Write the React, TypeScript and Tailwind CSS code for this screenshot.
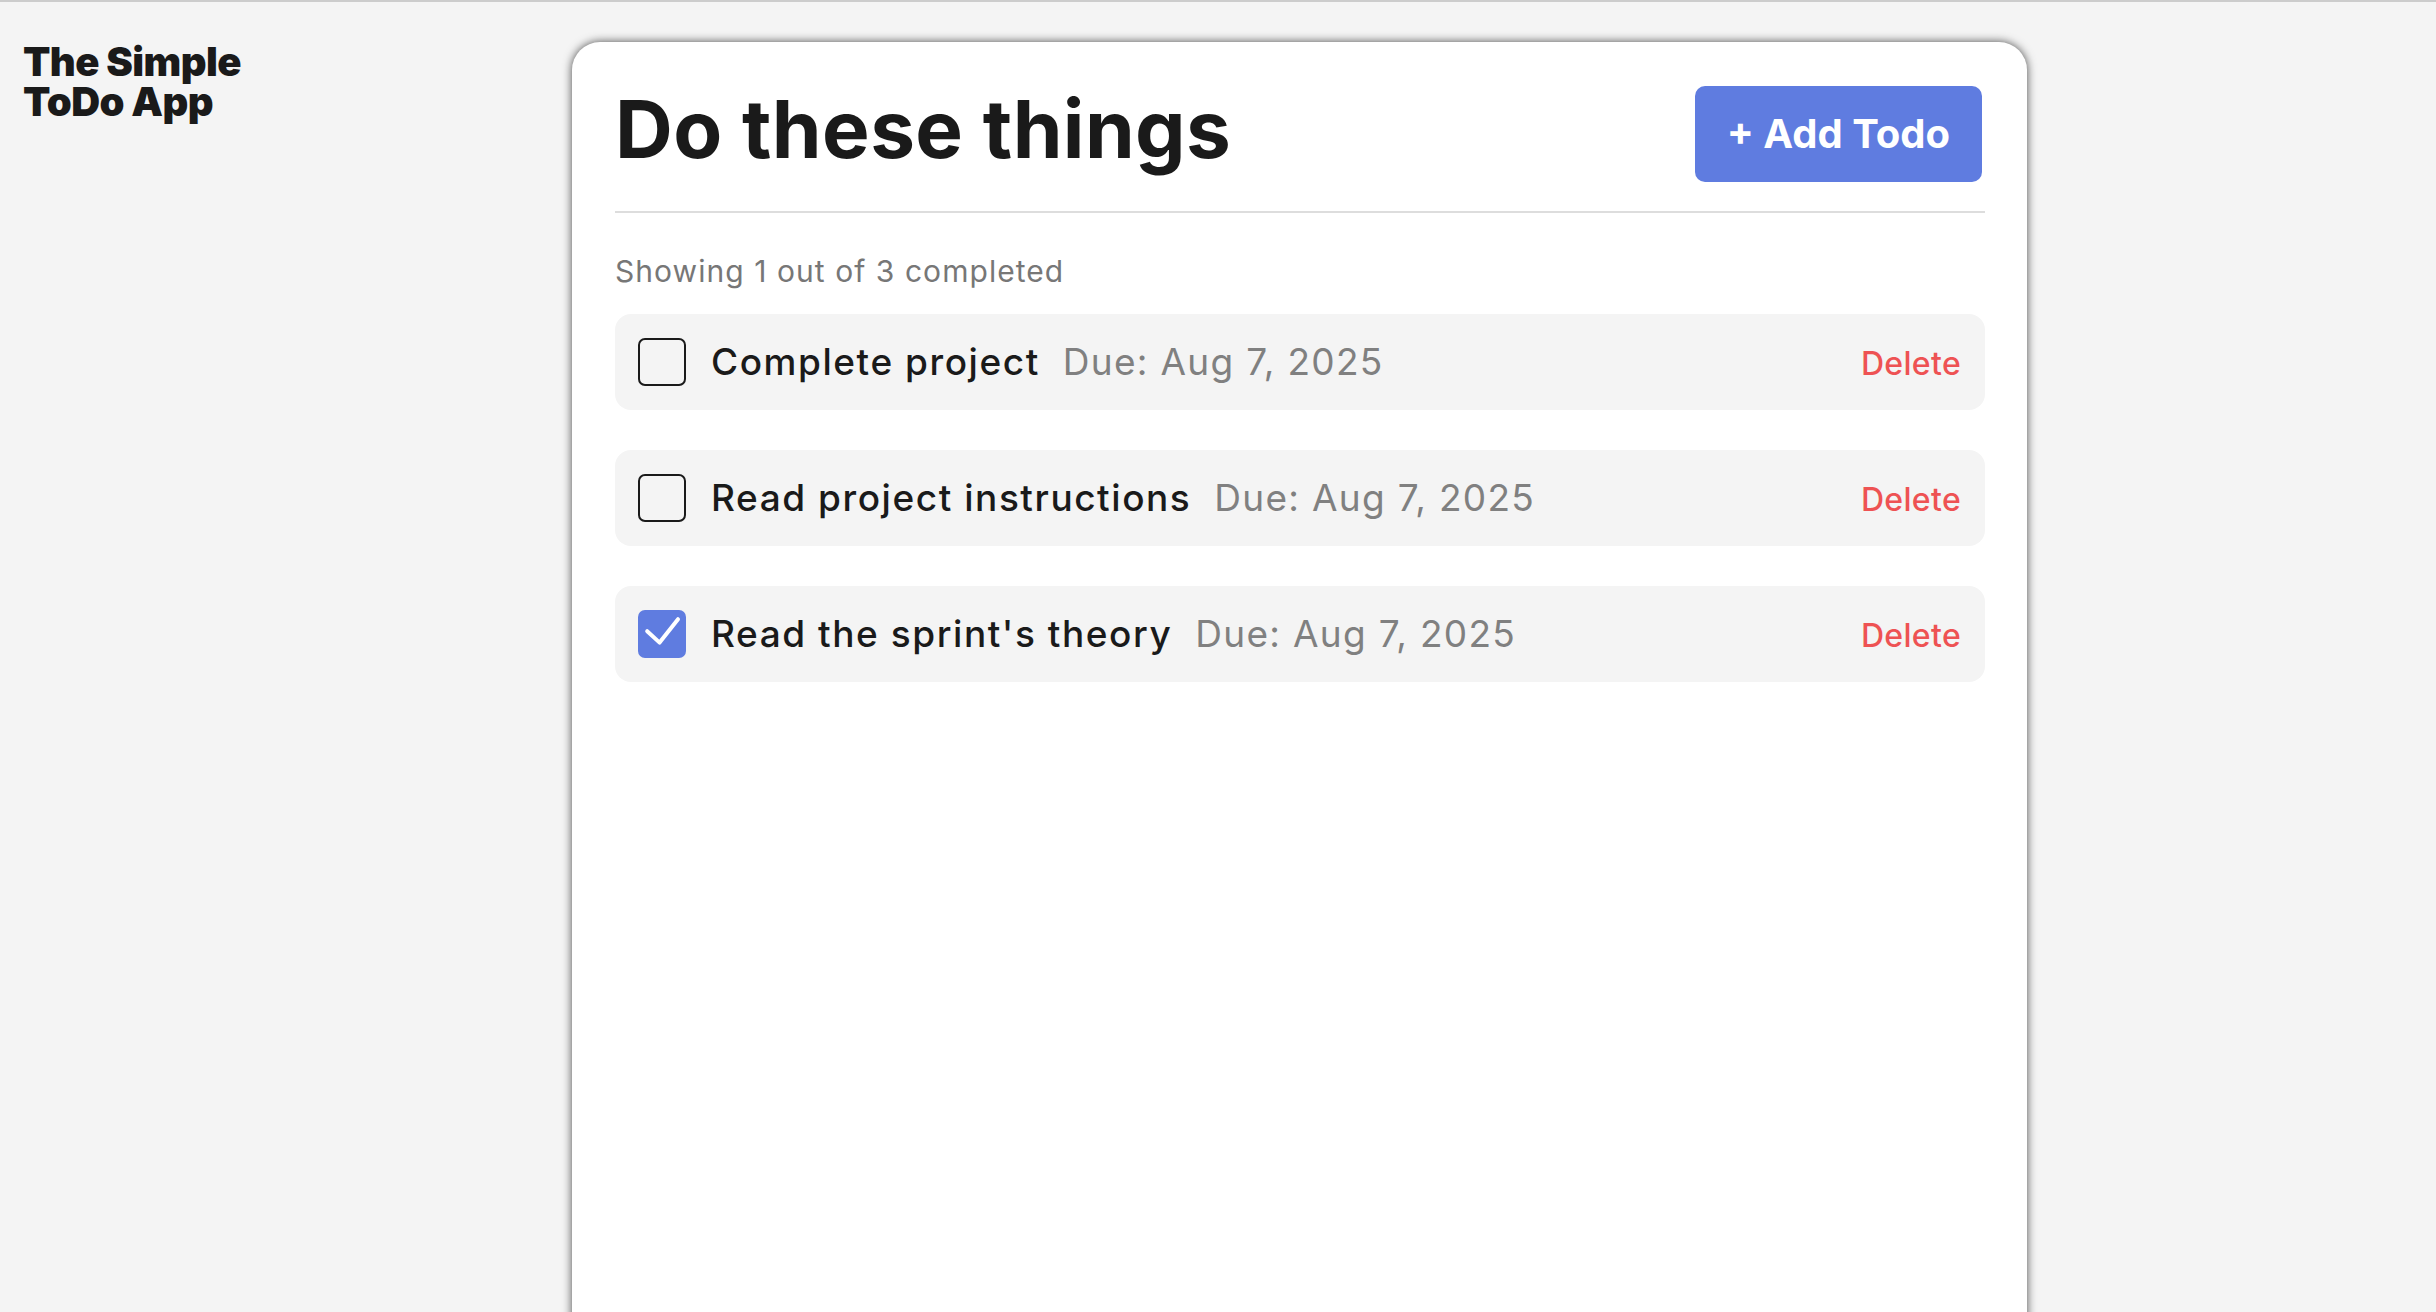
import React from "react";

type Todo = { id: number; title: string; due: string; done: boolean };

const todos: Todo[] = [
  { id: 1, title: "Complete project", due: "Aug 7, 2025", done: false },
  { id: 2, title: "Read project instructions", due: "Aug 7, 2025", done: false },
  { id: 3, title: "Read the sprint's theory", due: "Aug 7, 2025", done: true },
];

function Checkbox({ checked }: { checked: boolean }) {
  if (checked) {
    return (
      <span className="flex h-[48px] w-[48px] shrink-0 items-center justify-center rounded-[7px] bg-[#5f7ce0]">
        <svg width="48" height="48" viewBox="0 0 24 24" fill="none">
          <path
            d="M4.6 10.6 L10.8 16.3 L20 4.6"
            stroke="white"
            strokeWidth="2"
            strokeLinecap="round"
            strokeLinejoin="round"
          />
        </svg>
      </span>
    );
  }
  return (
    <span className="block h-[48px] w-[48px] shrink-0 rounded-[7px] border-2 border-[#1a1a1a] bg-transparent" />
  );
}

export default function App() {
  const completed = todos.filter((t) => t.done).length;

  return (
    <div className="flex h-[1312px] w-full overflow-hidden border-t-2 border-[#cccccc] bg-[#f4f4f4] font-['Inter',sans-serif]">
      {/* Logo column */}
      <aside className="w-[572px] shrink-0 pl-[23px] pt-[40px]">
        <h1 className="text-[40px] font-black leading-[40px] tracking-[-0.015em] text-[#1a1a1a]">
          <span className="block">The Simple</span>
          <span className="block">ToDo App</span>
        </h1>
      </aside>

      {/* Card */}
      <main className="mt-[40px] min-h-[1400px] w-[1455px] shrink-0 rounded-t-[28px] bg-white pl-[43px] pr-[42px] pt-[44px] shadow-[0_0_10px_rgba(0,0,0,0.7)]">
        <div className="flex items-start justify-between border-b-2 border-[#dddddd] pb-[29px]">
          <h2 className="mt-[3px] text-[80px] font-bold leading-[80px] tracking-[0.005em] text-[#1a1a1a]">
            Do these things
          </h2>
          <button className="mr-[3px] h-[96px] rounded-[10px] bg-[#5f7ce0] px-[32px] text-[40px] font-bold text-white">
            + Add Todo
          </button>
        </div>

        <p className="mt-[40px] mb-[25px] text-[30px] leading-[36px] tracking-[0.035em] text-[#777777]">
          Showing {completed} out of {todos.length} completed
        </p>

        <ul className="flex flex-col gap-[40px]">
          {todos.map((t) => (
            <li
              key={t.id}
              className="flex h-[96px] items-center rounded-[16px] bg-[#f4f4f4] pl-[23px] pr-[24px]"
            >
              <Checkbox checked={t.done} />
              <span className="ml-[25px] text-[37px] font-medium tracking-[0.042em] text-[#1a1a1a]">
                {t.title}
              </span>
              <span className="ml-[23px] text-[37px] tracking-[0.035em] text-[#808080]">
                Due: {t.due}
              </span>
              <button className="ml-auto pt-[4px] text-[32px] font-medium tracking-[0.01em] text-[#ee5253]">
                Delete
              </button>
            </li>
          ))}
        </ul>
      </main>
    </div>
  );
}
